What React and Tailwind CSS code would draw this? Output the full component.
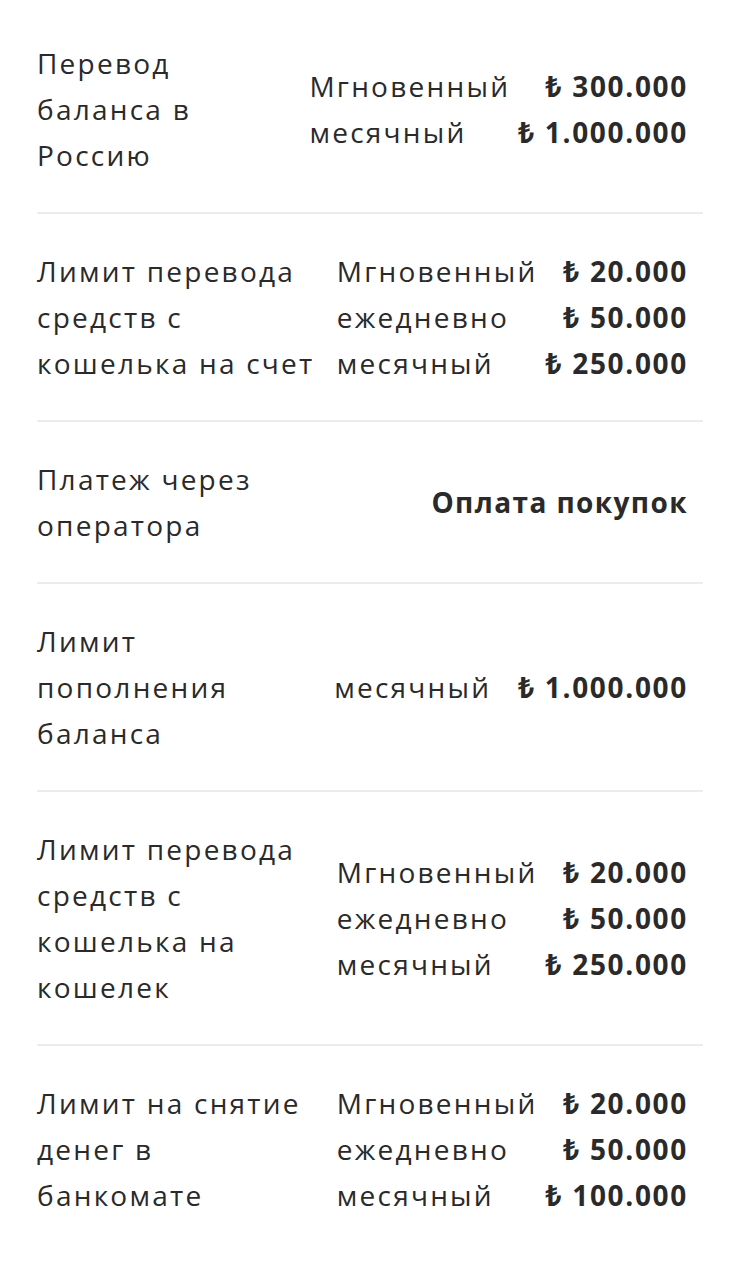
import React from 'react';

const rows = [
  {
    label: ['Перевод', 'баланса в', 'Россию'],
    limits: [
      { period: 'Мгновенный', amount: '300.000' },
      { period: 'месячный', amount: '1.000.000' },
    ],
  },
  {
    label: ['Лимит перевода', 'средств с', 'кошелька на счет'],
    limits: [
      { period: 'Мгновенный', amount: '20.000' },
      { period: 'ежедневно', amount: '50.000' },
      { period: 'месячный', amount: '250.000' },
    ],
  },
  {
    label: ['Платеж через', 'оператора'],
    note: 'Оплата покупок',
  },
  {
    label: ['Лимит', 'пополнения', 'баланса'],
    limits: [{ period: 'месячный', amount: '1.000.000' }],
  },
  {
    label: ['Лимит перевода', 'средств с', 'кошелька на', 'кошелек'],
    limits: [
      { period: 'Мгновенный', amount: '20.000' },
      { period: 'ежедневно', amount: '50.000' },
      { period: 'месячный', amount: '250.000' },
    ],
  },
  {
    label: ['Лимит на снятие', 'денег в', 'банкомате'],
    limits: [
      { period: 'Мгновенный', amount: '20.000' },
      { period: 'ежедневно', amount: '50.000' },
      { period: 'месячный', amount: '100.000' },
    ],
  },
];

const LimitRow = ({ row, last }) => {
  return (
    <li
      className={`flex items-center gap-4 py-[34px] pr-[15px] ${
        last ? '' : 'border-b-2 border-[#ececec]'
      }`}
    >
      <div className="flex-1">
        {row.label.map((line) => (
          <div key={line} className="whitespace-nowrap">
            {line}
          </div>
        ))}
      </div>
      {row.note ? (
        <div className="font-bold tracking-[0.05em] whitespace-nowrap">{row.note}</div>
      ) : (
        <div className="grid flex-none grid-cols-[minmax(176px,auto)_auto] gap-x-2 whitespace-nowrap">
          {row.limits.map((item) => (
            <React.Fragment key={item.period}>
              <span>{item.period}</span>
              <span className="text-right font-bold tracking-[0.06em]">₺ {item.amount}</span>
            </React.Fragment>
          ))}
        </div>
      )}
    </li>
  );
};

const App = () => {
  return (
    <main
      className="min-h-screen bg-white px-[37px] pt-[6px] text-[28px] leading-[46px] tracking-[0.08em] text-[#2a2a2a]"
      style={{ fontFamily: '"Open Sans", "Noto Sans", sans-serif' }}
    >
      <ul>
        {rows.map((row, idx) => (
          <LimitRow key={idx} row={row} last={idx === rows.length - 1} />
        ))}
      </ul>
    </main>
  );
};

export default App;
